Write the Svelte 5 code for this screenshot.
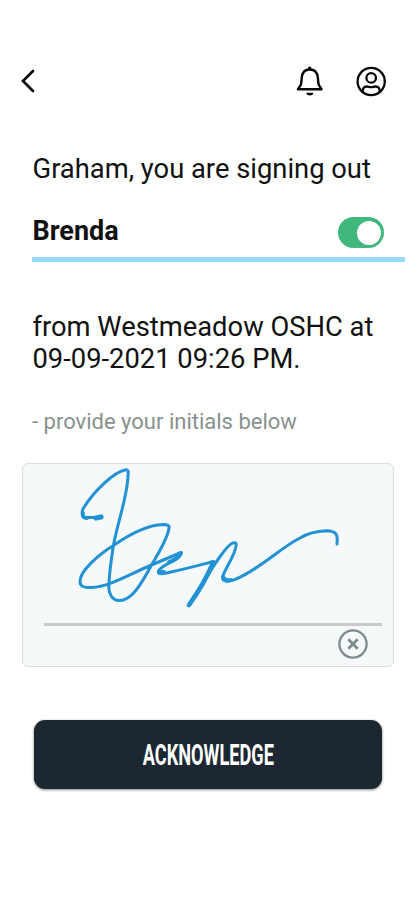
<script>
  let signingOut = $state(true);
</script>

<main>
  <header>
    <button class="icon back" aria-label="Back">
      <svg width="16" height="24" viewBox="0 0 16 24"><path d="M13 2 3 12l10 10" fill="none" stroke="#080808" stroke-width="2.7" stroke-linecap="round" /></svg>
    </button>
    <nav>
      <button class="icon" aria-label="Notifications">
        <svg width="30" height="32" viewBox="0 0 30 32" fill="none" stroke="#080808" stroke-width="2.4" stroke-linejoin="round" stroke-linecap="round">
          <path d="M2.900 24.200h23.600l-2.600-4.100c-.8-2.200-.7-3.800-1-7.200C22.400 7.200 19.200 4.500 14.700 4.500S7.200 7.200 6.700 12.900c-.3 3.400-.2 5-1 7.200z" />
          <circle cx="14.700" cy="3.200" r="1" fill="#080808" stroke-width="1.5" />
          <path d="M12 28.500h5.600c-.5 1.800-5.100 1.800-5.600 0z" fill="#080808" stroke-width="1.300" />
        </svg>
      </button>
      <button class="icon" aria-label="Account">
        <svg width="32" height="32" viewBox="0 0 32 32" fill="none" stroke="#080808" stroke-width="2.300">
          <circle cx="16.200" cy="16.5" r="13.6" />
          <circle cx="16.200" cy="12.9" r="4.8" />
          <path d="M7.7 27c-.3-3.800 1.600-5.700 4.300-5.500 1.600.1 2.200.7 4.200.7s2.600-.6 4.200-.7c2.700-.2 4.600 1.700 4.300 5.500" />
        </svg>
      </button>
    </nav>
  </header>

  <p class="lead">Graham, you are signing out</p>
  <section class="child">
    <strong>Brenda</strong>
    <button class="toggle" class:on={signingOut} role="switch" aria-checked={signingOut} aria-label="Brenda" onclick={() => (signingOut = !signingOut)}><span></span></button>
  </section>
  <p class="detail">from Westmeadow OSHC at<br />09-09-2021 09:26 PM.</p>
  <p class="hint">- provide your initials below</p>

  <section class="pad">
    <svg class="ink" width="369" height="158" viewBox="23 464 369 158" fill="none" stroke="#2292d5" stroke-width="3" stroke-linecap="round" stroke-linejoin="round">
      <path d="M101 517.500H87C82 518.500 81 513 83.500 508C94 491 114 472 125 470Q129 468.500 128 475C128 494 118 521 113.300 546C111 562 109 574 109 585C108 593 112 600.500 119 600.500C131 601 141 585 151.500 565C160 551 168 537 169 528Q170 524.500 163 524.500C148 525 130 534 113 545.700C98 555 80 571 80 581.500C80 586.500 84 587.800 91.500 587.500C109 587 130 574 151.500 565L181 552.500C181 561 163 563 158.500 571C157 575 164 574 171 572C185 569 200 565 213.500 561.500C212 573 196 592 188.500 605.500" />
      <path d="M188.500 605.500C199 591 211 568 222 554Q232 540 236 543.500C238 551 224 570 223 576C221 583 230 582 236 579C260 569 280 548 300 538C308 533 318 531 326.500 530.700C337 531 338 535 337 544" />
      <path d="M87 518Q82 518 83 513" stroke-width="3.800" />
      <path d="M101 517 96 518" stroke-width="5.200" />
      <path d="M213 563Q204 584 189 605" stroke-width="4.600" />
      <path d="M181 553Q177 559 169 562M159 572 164 572M223 577Q224 581 231 580" stroke-width="4" />
    </svg>
    <div class="rule"></div>
    <button class="icon clear" aria-label="Clear signature">
      <svg width="30" height="30" viewBox="0 0 30 30" fill="none" stroke="#7d8b8b"><circle cx="15" cy="15" r="13.6" stroke-width="2.3" /><path d="m10.300 10.300 9.400 9.400m0-9.400-9.400 9.400" stroke-width="2.800" /></svg>
    </button>
  </section>

  <button class="submit"><span>ACKNOWLEDGE</span></button>
</main>

<style>
  :global(body) { margin: 0; background: #fff; }
  main { box-sizing: border-box; width: 415px; height: 900px; padding-top: 64px; background: #fff; color: #111; font-family: Roboto, sans-serif; }
  button { padding: 0; border: 0; cursor: pointer; font-family: inherit; }
  .icon { display: flex; background: none; }
  header { display: flex; align-items: center; justify-content: space-between; height: 34px; padding: 0 28px 0 20px; }
  nav { display: flex; align-items: center; gap: 30px; }
  p { margin: 0; white-space: nowrap; }
  .lead { margin: 55px 0 0 32.5px; font-size: 27.35px; line-height: 32px; }
  .child { box-sizing: border-box; display: flex; align-items: center; justify-content: space-between; width: 373px; height: 57px; margin: 20px 0 0 32px; padding: 3px 21px 0 0; border-bottom: 5px solid #98dcfc; }
  strong { margin: -3px 0 0 0.5px; font-size: 27px; line-height: 32px; font-weight: 700; }
  .toggle { display: flex; align-items: center; width: 46px; height: 31px; padding: 0 3px; border-radius: 16px; background: #aaa; }
  .toggle.on { justify-content: flex-end; background: #40b87d; }
  .toggle span { width: 24px; height: 24px; border-radius: 50%; background: #fff; }
  .detail { margin: 49px 0 0 32.5px; font-size: 27.35px; line-height: 32px; }
  .hint { margin: 33px 0 0 32px; color: #87918f; font-size: 22px; line-height: 28px; }
  .pad { box-sizing: border-box; width: 372px; height: 204px; margin: 27px 0 0 22px; border: 1.5px solid #d9dddd; border-radius: 6px; background: #f6f9f9; }
  .ink { display: block; }
  .rule { width: 338px; height: 3px; margin: 1px 0 0 21px; background: #c7cbcb; }
  .clear { margin: 3px 0 0 315px; }
  .submit { display: flex; align-items: center; justify-content: center; width: 348px; height: 69px; margin: 53px 0 0 34px; border-radius: 11px; background: #1c2732; box-shadow: 0 1px 3px #0007; color: #fff; }
  .submit span { font-size: 30px; line-height: 36px; font-weight: 700; transform: scaleX(0.605); }
</style>
